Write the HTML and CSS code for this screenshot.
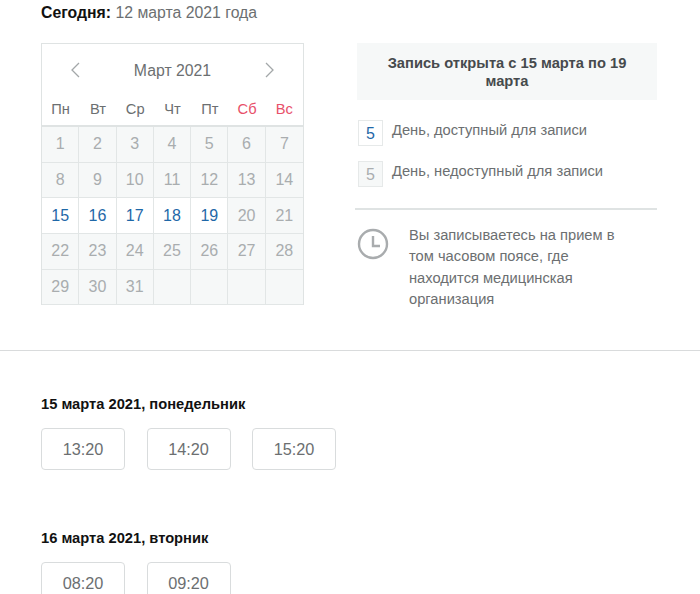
FILE: index.html
```html
<!DOCTYPE html>
<html lang="ru">
<head>
    <meta charset="UTF-8">
    <title>Запись на прием</title>
    <link rel="stylesheet" href="styles.css">
</head>
<body>
    <div class="today"><b>Сегодня:</b> 12 марта 2021 года</div>

    <div class="top">
        <div class="calendar">
            <div class="cal-head">
                <svg class="arrow" width="12" height="18" viewBox="0 0 12 18"><path d="M10 2 L3 9 L10 16" /></svg>
                <span class="month">Март 2021</span>
                <svg class="arrow" width="12" height="18" viewBox="0 0 12 18"><path d="M2 2 L9 9 L2 16" /></svg>
            </div>
            <div class="weekdays">
                <span>Пн</span><span>Вт</span><span>Ср</span><span>Чт</span><span>Пт</span>
                <span class="red">Сб</span><span class="red">Вс</span>
            </div>
            <div class="days">
                <div class="day">1</div><div class="day">2</div><div class="day">3</div><div class="day">4</div><div class="day">5</div><div class="day">6</div><div class="day">7</div>
                <div class="day">8</div><div class="day">9</div><div class="day">10</div><div class="day">11</div><div class="day">12</div><div class="day">13</div><div class="day">14</div>
                <div class="day open">15</div><div class="day open">16</div><div class="day open">17</div><div class="day open">18</div><div class="day open">19</div><div class="day">20</div><div class="day">21</div>
                <div class="day">22</div><div class="day">23</div><div class="day">24</div><div class="day">25</div><div class="day">26</div><div class="day">27</div><div class="day">28</div>
                <div class="day">29</div><div class="day">30</div><div class="day">31</div><div class="day"></div><div class="day"></div><div class="day"></div><div class="day"></div>
            </div>
        </div>

        <div class="info">
            <div class="notice">Запись открыта с 15 марта по 19 марта</div>
            <div class="legend">
                <div class="legend-row">
                    <span class="swatch open">5</span>
                    <span>День, доступный для записи</span>
                </div>
                <div class="legend-row">
                    <span class="swatch">5</span>
                    <span>День, недоступный для записи</span>
                </div>
            </div>
            <div class="timezone">
                <svg class="clock" width="32" height="32" viewBox="0 0 32 32"><circle cx="16" cy="16" r="14" /><path d="M16 8 V18 H23" /></svg>
                <p>Вы записываетесь на прием в том часовом поясе, где находится медицинская организация</p>
            </div>
        </div>
    </div>

    <div class="slots">
        <div class="slot-day">
            <h3>15 марта 2021, понедельник</h3>
            <div class="times">
                <div class="time">13:20</div>
                <div class="time">14:20</div>
                <div class="time">15:20</div>
            </div>
        </div>
        <div class="slot-day">
            <h3>16 марта 2021, вторник</h3>
            <div class="times">
                <div class="time">08:20</div>
                <div class="time">09:20</div>
            </div>
        </div>
    </div>
</body>
</html>
```

FILE: styles.css
```css
* {
    box-sizing: border-box;
}
html, body {
    height: 100%;
    overflow: hidden;
}
body {
    margin: 0;
    background: #fff;
    font-family: "Liberation Sans", Arial, sans-serif;
    color: #6c6f71;
}
.today {
    padding: 4px 41px 0;
    height: 43px;
    font-size: 15.8px;
    line-height: 18px;
}
.today b {
    color: #111;
}
.top {
    display: flex;
    padding: 0 43px 0 41px;
    gap: 51px;
    height: 308px;
    border-bottom: 1px solid #d9dbdc;
}
.calendar {
    width: 263px;
    height: 262px;
    border: 1px solid #dfe3e3;
    border-bottom: 0;
    flex: none;
}
.cal-head {
    display: flex;
    justify-content: space-between;
    align-items: center;
    height: 53px;
    padding: 0 27px;
}
.month {
    font-size: 15.8px;
    margin-top: 1px;
}
.arrow {
    margin-top: -2px;
}
.arrow path {
    fill: none;
    stroke: #a3a7a9;
    stroke-width: 1.3;
}
.weekdays {
    display: grid;
    grid-template-columns: repeat(7, 1fr);
    height: 30px;
    font-size: 14.7px;
    text-align: center;
    line-height: 24px;
    border-bottom: 2px solid #dfe3e3;
}
.weekdays .red {
    color: #e8506a;
}
.days {
    display: grid;
    grid-template-columns: repeat(7, 1fr);
    grid-auto-rows: 35.7px;
    background: #f6f8f8;
}
.day {
    display: flex;
    align-items: center;
    justify-content: center;
    font-size: 16px;
    color: #a9adaf;
    border-right: 1px solid #e2e6e6;
    border-bottom: 1px solid #e2e6e6;
}
.day:nth-child(7n) {
    border-right: 0;
}
.day.open {
    background: #fff;
    color: #1f68a8;
}
.info {
    width: 302px;
    flex: none;
}
.notice {
    margin-left: 2px;
    width: 300px;
    height: 57px;
    padding: 11px 20px 0;
    background: #f6f8f8;
    text-align: center;
    font-size: 14.7px;
    font-weight: bold;
    line-height: 18px;
    color: #464a4d;
}
.legend {
    display: flex;
    flex-direction: column;
    gap: 15px;
    margin-top: 20px;
    padding: 0 0 21px 3px;
    border-bottom: 2px solid #dfe3e3;
}
.legend-row {
    display: flex;
    align-items: flex-start;
    gap: 9px;
    font-size: 14.7px;
    line-height: 21px;
}
.swatch {
    width: 25px;
    height: 26px;
    line-height: 26px;
    font-size: 16px;
    text-align: center;
    color: #a9adaf;
    background: #f6f8f8;
    border: 1px solid #e6e9e9;
}
.swatch.open {
    background: #fff;
    color: #1f68a8;
}
.timezone {
    display: flex;
    gap: 20px;
    padding: 18px 0 0 2px;
}
.clock {
    flex: none;
}
.clock circle, .clock path {
    fill: none;
    stroke: #a9acae;
    stroke-width: 2.4;
}
.timezone p {
    margin: -3px 0 0;
    width: 222px;
    font-size: 14.7px;
    line-height: 21.4px;
}
.slots {
    padding: 44px 41px 0;
}
.slot-day {
    height: 133.5px;
}
.slot-day h3 {
    margin: 0 0 15px;
    font-size: 14.7px;
    line-height: 18px;
    color: #111;
}
.times {
    display: flex;
    gap: 21.5px;
}
.time {
    width: 84px;
    height: 42px;
    border: 1px solid #d9dcdd;
    border-radius: 4px;
    font-size: 16.3px;
    line-height: 40px;
    text-align: center;
}
```
